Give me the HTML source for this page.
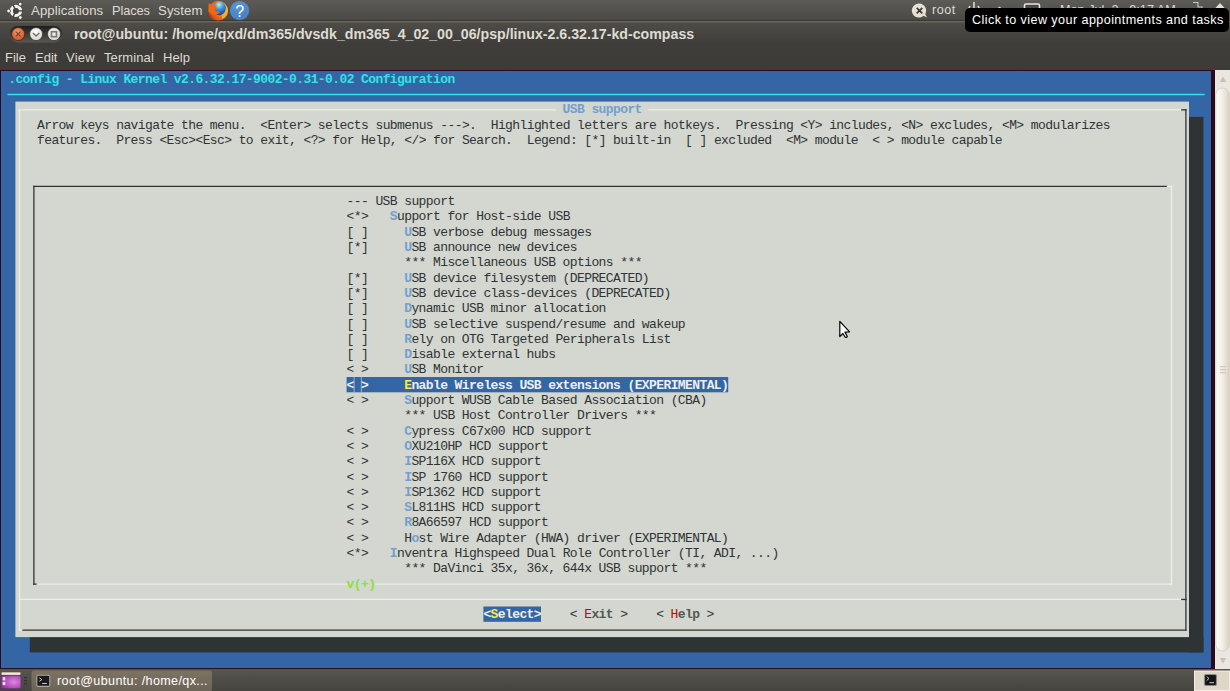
<!DOCTYPE html>
<html><head><meta charset="utf-8"><style>
*{margin:0;padding:0}
html,body{width:1230px;height:691px;overflow:hidden;background:#3c3b37;position:relative}
body{font-family:"Liberation Sans",sans-serif}
#term{position:absolute;left:1.0px;top:71.0px;width:1209.6px;height:596.7px;background:#3465a4;overflow:hidden}
.ui{position:absolute;white-space:pre;color:#dfdbd2;font-family:"Liberation Sans",sans-serif}
.t{position:absolute;white-space:pre;font-family:"Liberation Mono",monospace;font-size:13.0px;line-height:15.3px;letter-spacing:-0.600px}
</style></head>
<body>
<!-- top panel -->
<div style="position:absolute;left:0;top:0;width:1230px;height:20px;background:linear-gradient(#5c5b56,#4b4a46)"></div>
<div style="position:absolute;left:0;top:20px;width:1230px;height:1px;background:#383732"></div>
<div style="position:absolute;left:0;top:21px;width:1230px;height:1px;background:#6e675c"></div>
<div style="position:absolute;left:0;top:22px;width:1230px;height:1px;background:#5a564e"></div>
<!-- window title area + menubar -->
<div style="position:absolute;left:0;top:23px;width:1230px;height:47px;background:linear-gradient(#4e4c47 0,#3e3d39 21px,#3c3b37 100%)"></div>
<!-- panel items -->
<svg style="position:absolute;left:0;top:0" width="260" height="22">
  <circle cx="15.9" cy="10.9" r="4.6" fill="none" stroke="#f4f2ee" stroke-width="3.2"/>
  <g stroke="#45443f" stroke-width="1.4"><line x1="15.9" y1="10.9" x2="22.90" y2="10.90"/><line x1="15.9" y1="10.9" x2="12.94" y2="17.24"/><line x1="15.9" y1="10.9" x2="12.94" y2="4.56"/></g>
  <circle cx="15.9" cy="10.9" r="2.6" fill="#45443f"/>
  <g fill="#f4f2ee" stroke="#3a3935" stroke-width="0.8">
    <circle cx="8.6" cy="11.0" r="1.9"/>
    <circle cx="20.2" cy="4.1" r="1.9"/>
    <circle cx="20.3" cy="17.5" r="1.9"/>
  </g>
  <defs>
    <radialGradient id="ffg" cx="0.45" cy="0.2" r="0.8">
      <stop offset="0" stop-color="#b5f0ff"/><stop offset="0.45" stop-color="#3b93dc"/><stop offset="1" stop-color="#173e8c"/>
    </radialGradient>
    <radialGradient id="ffo" cx="0.8" cy="0.35" r="0.9">
      <stop offset="0" stop-color="#fbd33a"/><stop offset="0.35" stop-color="#f28a1c"/><stop offset="0.75" stop-color="#e45614"/><stop offset="1" stop-color="#b92a0c"/>
    </radialGradient>
    <radialGradient id="hlp" cx="0.45" cy="0.3" r="0.75">
      <stop offset="0" stop-color="#5f97d2"/><stop offset="0.8" stop-color="#4580c2"/><stop offset="1" stop-color="#3a6fb0"/>
    </radialGradient>
  </defs>
  <circle cx="218.1" cy="10.7" r="9.9" fill="url(#ffo)"/>
  <circle cx="219.6" cy="8.6" r="6.6" fill="url(#ffg)"/>
  <path d="M 208.6 3.2 L 211.6 4.6 L 213.6 3.4 L 214.6 5.2 L 216.9 6.6 L 215.6 8.6 L 215.2 10.6 L 217.6 11.6 L 219.8 11.9 L 219.2 13.4 L 216 14.6 L 211.5 14.2 L 208.5 11.5 Z" fill="#ea6a1a"/>
  <path d="M 221.5 14.8 C 224.5 13.5, 226 10.5, 225.8 6.5 L 227.6 8 C 228.6 12, 227 17, 222.5 19 Z" fill="#f7b52a" opacity="0.85"/>
  <circle cx="239.6" cy="10.65" r="9.7" fill="url(#hlp)"/>
  <circle cx="239.6" cy="10.65" r="8.2" fill="none" stroke="#6c9fd6" stroke-width="0.7" opacity="0.5"/>
  <text x="239.6" y="16.8" text-anchor="middle" font-family="Liberation Sans" font-size="16" fill="#ffffff">?</text>
</svg>
<div class="ui" style="left:31px;top:1px;font-size:13.2px;letter-spacing:0.1px;line-height:19px">Applications</div>
<div class="ui" style="left:112px;top:1px;font-size:12.8px;letter-spacing:-0.1px;line-height:19px">Places</div>
<div class="ui" style="left:158px;top:1px;font-size:13.2px;letter-spacing:0.1px;line-height:19px">System</div>
<!-- right side of panel (partially hidden by tooltip) -->
<svg style="position:absolute;left:900px;top:0" width="330" height="22">
  <path d="M 19.5 3.6 A 7 7 0 1 0 23.5 15.8 L 27 17.6 L 25.3 14 A 7 7 0 0 0 19.5 3.6 Z" fill="#e6e1d6"/>
  <path d="M 16.7 7.8 L 22.3 13.4 M 22.3 7.8 L 16.7 13.4" stroke="#3a3935" stroke-width="1.7"/>
  <g stroke="#dfdbd2" stroke-width="1.6" fill="none">
    <path d="M 70 6 A 5 5 0 1 0 78 6"/><path d="M 74 2 L 74 8"/>
  </g>
  <circle cx="99.5" cy="8" r="1.3" fill="#dfdbd2"/>
  <rect x="124.5" y="4" width="15" height="9" rx="1.5" fill="#4a4844" stroke="#ebe6dc" stroke-width="1.6"/>
  <path d="M 293 2.5 L 298 2.5 L 298 7 L 302 7 L 302 10" stroke="#cfcac0" stroke-width="1.1" fill="none"/>
  <path d="M 320 3 L 325.5 9 L 314.5 9 Z" fill="#e4e0d8"/>
</svg>
<div class="ui" style="left:932px;top:1px;font-size:12.6px;letter-spacing:0.5px;line-height:19px">root</div>
<div class="ui" style="left:1060px;top:1px;font-size:12.6px;letter-spacing:0.05px;line-height:19px">Mon Jul  2,  9:17 AM</div>
<!-- window buttons -->
<svg style="position:absolute;left:0;top:22px" width="70" height="24">
  <defs>
    <linearGradient id="pill" x1="0" y1="0" x2="0" y2="1"><stop offset="0" stop-color="#1f1e1c"/><stop offset="1" stop-color="#5a5852"/></linearGradient>
    <radialGradient id="cls" cx="0.45" cy="0.35" r="0.7"><stop offset="0" stop-color="#f79a6a"/><stop offset="1" stop-color="#d8471b"/></radialGradient>
    <radialGradient id="gry" cx="0.45" cy="0.35" r="0.7"><stop offset="0" stop-color="#ffffff"/><stop offset="1" stop-color="#d6d1c8"/></radialGradient>
  </defs>
  <rect x="9.5" y="4" width="53" height="16.5" rx="8.2" fill="url(#pill)"/>
  <circle cx="18.2" cy="12.1" r="6.5" fill="url(#cls)" stroke="#2a2926" stroke-width="0.7"/>
  <path d="M 15.8 9.7 L 20.6 14.5 M 20.6 9.7 L 15.8 14.5" stroke="#6b4436" stroke-width="1.1"/>
  <circle cx="36.1" cy="12.1" r="6.5" fill="url(#gry)" stroke="#2a2926" stroke-width="0.7"/>
  <path d="M 32.9 11 L 36.1 14 L 39.3 11" stroke="#75726c" stroke-width="1.6" fill="none"/>
  <circle cx="54" cy="12.1" r="6.5" fill="url(#gry)" stroke="#2a2926" stroke-width="0.7"/>
  <rect x="51.5" y="9.7" width="5" height="5" stroke="#7a7772" stroke-width="1.7" fill="none"/>
</svg>
<div class="ui" style="left:74px;top:25px;font-size:14.2px;font-weight:bold;letter-spacing:0px;line-height:19px">root@ubuntu: /home/qxd/dm365/dvsdk_dm365_4_02_00_06/psp/linux-2.6.32.17-kd-compass</div>
<!-- menubar -->
<div class="ui" style="left:5px;top:48px;font-size:13px;line-height:19px">File</div>
<div class="ui" style="left:35px;top:48px;font-size:13px;line-height:19px">Edit</div>
<div class="ui" style="left:66px;top:48px;font-size:13px;letter-spacing:0.2px;line-height:19px">View</div>
<div class="ui" style="left:104px;top:48px;font-size:13px;letter-spacing:0.1px;line-height:19px">Terminal</div>
<div class="ui" style="left:163px;top:48px;font-size:13px;letter-spacing:0.1px;line-height:19px">Help</div>
<!-- terminal border -->
<div style="position:absolute;left:0;top:70px;width:1216px;height:599px;background:#2c0a1e"></div>
<!-- scrollbar -->
<div style="position:absolute;left:1215px;top:70px;width:15px;height:599px;background:#ebe7e0"></div>
<svg style="position:absolute;left:1215px;top:70px" width="15" height="599">
  <defs><linearGradient id="thumb" x1="0" y1="0" x2="1" y2="0"><stop offset="0" stop-color="#fdfcfa"/><stop offset="0.45" stop-color="#f3f0ea"/><stop offset="1" stop-color="#dcd2c2"/></linearGradient></defs>
  <path d="M 8 6.5 L 11.3 12 L 4.7 12 Z" fill="#cbc1b0"/>
  <rect x="0.8" y="18" width="13.4" height="563" rx="6.5" fill="url(#thumb)" stroke="#d3cabb" stroke-width="0.8"/>
  <g fill="#d0c7b8"><rect x="5" y="296" width="6" height="1.2"/><rect x="5" y="299" width="6" height="1.2"/><rect x="5" y="302" width="6" height="1.2"/></g>
  <path d="M 8 593.5 L 11.3 588 L 4.7 588 Z" fill="#cbc1b0"/>
</svg>
<!-- taskbar -->
<div style="position:absolute;left:0;top:669px;width:1230px;height:22px;background:linear-gradient(#57554f,#45443f)"></div>
<svg style="position:absolute;left:0;top:669px" width="260" height="22">
  <defs><radialGradient id="desk" cx="0.65" cy="0.5" r="0.7"><stop offset="0" stop-color="#d98ad8"/><stop offset="0.6" stop-color="#b653c0"/><stop offset="1" stop-color="#9a2da6"/></radialGradient>
  <linearGradient id="tbtn" x1="0" y1="0" x2="0" y2="1"><stop offset="0" stop-color="#7c7363"/><stop offset="1" stop-color="#6b6356"/></linearGradient></defs>
  <rect x="1" y="3" width="20" height="17" rx="1.5" fill="#3a3833"/>
  <rect x="1.3" y="6.6" width="19.4" height="12.8" rx="1.2" fill="url(#desk)"/>
  <rect x="1.5" y="3.3" width="19" height="2.6" fill="#efebd2"/>
  <rect x="2.7" y="8.2" width="2.6" height="3.2" fill="#f5e3f5"/><rect x="2.7" y="12.9" width="2.6" height="3.2" fill="#f5e3f5"/>
  <g fill="#34332f"><rect x="24" y="8" width="3" height="1.3"/><rect x="24" y="11" width="3" height="1.3"/><rect x="24" y="14" width="3" height="1.3"/></g>
  <rect x="31.5" y="1.5" width="180.5" height="21" rx="2.5" fill="url(#tbtn)"/>
  <rect x="36.8" y="6.2" width="13" height="11.2" rx="1.5" fill="#1b1b1b" stroke="#a9a9a9" stroke-width="1.1"/>
  <path d="M 39.3 8.8 L 41.8 10.6 L 39.3 12.4" stroke="#c8c8c8" stroke-width="1" fill="none"/>
  <rect x="42.2" y="14" width="4.6" height="1" fill="#d0d0d0"/>
</svg>
<div class="ui" style="left:57px;top:672px;font-size:12.6px;letter-spacing:0.36px;line-height:19px;color:#ffffff">root@ubuntu: /home/qx...</div>
<svg style="position:absolute;left:1190px;top:669px" width="40" height="22">
  <rect x="4.5" y="2" width="35" height="19.5" fill="#dfd6c8" stroke="#f3efe8" stroke-width="1"/>
  <rect x="14.5" y="5.5" width="12" height="11" rx="1.5" fill="#151515" stroke="#8a8a8a" stroke-width="1.2"/>
  <path d="M 16.7 7.5 L 19 9.5 L 16.7 11.5" stroke="#cfcfcf" stroke-width="0.9" fill="none"/>
  <rect x="19.5" y="13.2" width="4.5" height="1" fill="#cfcfcf"/>
</svg>
<!-- tooltip -->
<div style="position:absolute;left:965px;top:8px;width:264px;height:24px;background:#000;border-radius:5px"></div>
<div class="ui" style="left:972px;top:11px;font-size:12.6px;letter-spacing:0.42px;line-height:19px;color:#ffffff">Click to view your appointments and tasks</div>

<div id="term">
<svg width="1209.6" height="596.7" style="position:absolute;left:0;top:0"><rect x="1188.00" y="45.90" width="14.40" height="535.50" fill="#2e3436"/><rect x="28.80" y="566.10" width="1173.60" height="15.30" fill="#2e3436"/><rect x="14.40" y="30.60" width="1173.60" height="535.50" fill="#d3d7cf"/><rect x="345.60" y="306.00" width="381.60" height="15.30" fill="#3465a4"/><rect x="482.40" y="535.50" width="57.60" height="15.30" fill="#3465a4"/><line x1="7.20" y1="23.55" x2="1202.80" y2="23.55" stroke="#34e2e2" stroke-width="1.6" stroke-linecap="square"/><line x1="18.50" y1="38.85" x2="554.40" y2="38.85" stroke="#eeeeec" stroke-width="1.3" stroke-linecap="square"/><line x1="648.00" y1="38.85" x2="1180.80" y2="38.85" stroke="#eeeeec" stroke-width="1.3" stroke-linecap="square"/><line x1="1180.80" y1="38.85" x2="1184.90" y2="38.85" stroke="#2e3436" stroke-width="1.3" stroke-linecap="square"/><line x1="18.50" y1="38.85" x2="18.50" y2="559.05" stroke="#eeeeec" stroke-width="1.3" stroke-linecap="square"/><line x1="21.60" y1="559.05" x2="1184.90" y2="559.05" stroke="#2e3436" stroke-width="1.3" stroke-linecap="square"/><line x1="18.50" y1="559.05" x2="20.90" y2="559.05" stroke="#eeeeec" stroke-width="1.3" stroke-linecap="square"/><line x1="1184.90" y1="38.85" x2="1184.90" y2="559.05" stroke="#2e3436" stroke-width="1.3" stroke-linecap="square"/><line x1="32.90" y1="115.35" x2="1166.40" y2="115.35" stroke="#2e3436" stroke-width="1.3" stroke-linecap="square"/><line x1="1166.40" y1="115.35" x2="1170.50" y2="115.35" stroke="#eeeeec" stroke-width="1.3" stroke-linecap="square"/><line x1="32.90" y1="115.35" x2="32.90" y2="513.15" stroke="#2e3436" stroke-width="1.3" stroke-linecap="square"/><line x1="32.90" y1="513.15" x2="36.00" y2="513.15" stroke="#2e3436" stroke-width="1.3" stroke-linecap="square"/><line x1="36.00" y1="513.15" x2="345.60" y2="513.15" stroke="#eeeeec" stroke-width="1.3" stroke-linecap="square"/><line x1="374.40" y1="513.15" x2="1170.50" y2="513.15" stroke="#eeeeec" stroke-width="1.3" stroke-linecap="square"/><line x1="1170.50" y1="115.35" x2="1170.50" y2="513.15" stroke="#eeeeec" stroke-width="1.3" stroke-linecap="square"/><line x1="18.50" y1="528.45" x2="1180.80" y2="528.45" stroke="#eeeeec" stroke-width="1.3" stroke-linecap="square"/><line x1="1180.80" y1="528.45" x2="1184.90" y2="528.45" stroke="#2e3436" stroke-width="1.3" stroke-linecap="square"/><rect x="352.60" y="306.00" width="1" height="15.30" fill="#b8c2cc" opacity="0.8"/><rect x="359.80" y="306.00" width="1" height="15.30" fill="#b8c2cc" opacity="0.8"/></svg>
<div class="t" style="left:7.20px;top:0.70px;color:#34e2e2;font-weight:bold">.config - Linux Kernel v2.6.32.17-9002-0.31-0.02 Configuration</div><div class="t" style="left:561.60px;top:31.30px;color:#729fcf;font-weight:bold">USB support</div><div class="t" style="left:36.00px;top:46.60px;color:#2e3436">Arrow keys navigate the menu.  &lt;Enter&gt; selects submenus ---&gt;.  Highlighted letters are hotkeys.  Pressing &lt;Y&gt; includes, &lt;N&gt; excludes, &lt;M&gt; modularizes</div><div class="t" style="left:36.00px;top:61.90px;color:#2e3436">features.  Press &lt;Esc&gt;&lt;Esc&gt; to exit, &lt;?&gt; for Help, &lt;/&gt; for Search.  Legend: [*] built-in  [ ] excluded  &lt;M&gt; module  &lt; &gt; module capable</div><div class="t" style="left:345.60px;top:505.60px;color:#8ae234;font-weight:bold">v(+)</div><div class="t" style="left:345.60px;top:123.10px;color:#2e3436">--- </div><div class="t" style="left:374.40px;top:123.10px;color:#2e3436">USB support</div><div class="t" style="left:345.60px;top:138.40px;color:#2e3436">&lt;*&gt;   </div><div class="t" style="left:388.80px;top:138.40px;color:#729fcf;font-weight:bold">S</div><div class="t" style="left:396.00px;top:138.40px;color:#2e3436">upport for Host-side USB</div><div class="t" style="left:345.60px;top:153.70px;color:#2e3436">[ ]     </div><div class="t" style="left:403.20px;top:153.70px;color:#729fcf;font-weight:bold">U</div><div class="t" style="left:410.40px;top:153.70px;color:#2e3436">SB verbose debug messages</div><div class="t" style="left:345.60px;top:169.00px;color:#2e3436">[*]     </div><div class="t" style="left:403.20px;top:169.00px;color:#729fcf;font-weight:bold">U</div><div class="t" style="left:410.40px;top:169.00px;color:#2e3436">SB announce new devices</div><div class="t" style="left:345.60px;top:184.30px;color:#2e3436">        </div><div class="t" style="left:403.20px;top:184.30px;color:#2e3436">*** Miscellaneous USB options ***</div><div class="t" style="left:345.60px;top:199.60px;color:#2e3436">[*]     </div><div class="t" style="left:403.20px;top:199.60px;color:#729fcf;font-weight:bold">U</div><div class="t" style="left:410.40px;top:199.60px;color:#2e3436">SB device filesystem (DEPRECATED)</div><div class="t" style="left:345.60px;top:214.90px;color:#2e3436">[*]     </div><div class="t" style="left:403.20px;top:214.90px;color:#729fcf;font-weight:bold">U</div><div class="t" style="left:410.40px;top:214.90px;color:#2e3436">SB device class-devices (DEPRECATED)</div><div class="t" style="left:345.60px;top:230.20px;color:#2e3436">[ ]     </div><div class="t" style="left:403.20px;top:230.20px;color:#729fcf;font-weight:bold">D</div><div class="t" style="left:410.40px;top:230.20px;color:#2e3436">ynamic USB minor allocation</div><div class="t" style="left:345.60px;top:245.50px;color:#2e3436">[ ]     </div><div class="t" style="left:403.20px;top:245.50px;color:#729fcf;font-weight:bold">U</div><div class="t" style="left:410.40px;top:245.50px;color:#2e3436">SB selective suspend/resume and wakeup</div><div class="t" style="left:345.60px;top:260.80px;color:#2e3436">[ ]     </div><div class="t" style="left:403.20px;top:260.80px;color:#729fcf;font-weight:bold">R</div><div class="t" style="left:410.40px;top:260.80px;color:#2e3436">ely on OTG Targeted Peripherals List</div><div class="t" style="left:345.60px;top:276.10px;color:#2e3436">[ ]     </div><div class="t" style="left:403.20px;top:276.10px;color:#729fcf;font-weight:bold">D</div><div class="t" style="left:410.40px;top:276.10px;color:#2e3436">isable external hubs</div><div class="t" style="left:345.60px;top:291.40px;color:#2e3436">&lt; &gt;     </div><div class="t" style="left:403.20px;top:291.40px;color:#729fcf;font-weight:bold">U</div><div class="t" style="left:410.40px;top:291.40px;color:#2e3436">SB Monitor</div><div class="t" style="left:345.60px;top:306.70px;color:#eeeeec;font-weight:bold">&lt; &gt;     </div><div class="t" style="left:403.20px;top:306.70px;color:#fce94f;font-weight:bold">E</div><div class="t" style="left:410.40px;top:306.70px;color:#eeeeec;font-weight:bold">nable Wireless USB extensions (EXPERIMENTAL)</div><div class="t" style="left:345.60px;top:322.00px;color:#2e3436">&lt; &gt;     </div><div class="t" style="left:403.20px;top:322.00px;color:#729fcf;font-weight:bold">S</div><div class="t" style="left:410.40px;top:322.00px;color:#2e3436">upport WUSB Cable Based Association (CBA)</div><div class="t" style="left:345.60px;top:337.30px;color:#2e3436">        </div><div class="t" style="left:403.20px;top:337.30px;color:#2e3436">*** USB Host Controller Drivers ***</div><div class="t" style="left:345.60px;top:352.60px;color:#2e3436">&lt; &gt;     </div><div class="t" style="left:403.20px;top:352.60px;color:#729fcf;font-weight:bold">C</div><div class="t" style="left:410.40px;top:352.60px;color:#2e3436">ypress C67x00 HCD support</div><div class="t" style="left:345.60px;top:367.90px;color:#2e3436">&lt; &gt;     </div><div class="t" style="left:403.20px;top:367.90px;color:#729fcf;font-weight:bold">O</div><div class="t" style="left:410.40px;top:367.90px;color:#2e3436">XU210HP HCD support</div><div class="t" style="left:345.60px;top:383.20px;color:#2e3436">&lt; &gt;     </div><div class="t" style="left:403.20px;top:383.20px;color:#729fcf;font-weight:bold">I</div><div class="t" style="left:410.40px;top:383.20px;color:#2e3436">SP116X HCD support</div><div class="t" style="left:345.60px;top:398.50px;color:#2e3436">&lt; &gt;     </div><div class="t" style="left:403.20px;top:398.50px;color:#729fcf;font-weight:bold">I</div><div class="t" style="left:410.40px;top:398.50px;color:#2e3436">SP 1760 HCD support</div><div class="t" style="left:345.60px;top:413.80px;color:#2e3436">&lt; &gt;     </div><div class="t" style="left:403.20px;top:413.80px;color:#729fcf;font-weight:bold">I</div><div class="t" style="left:410.40px;top:413.80px;color:#2e3436">SP1362 HCD support</div><div class="t" style="left:345.60px;top:429.10px;color:#2e3436">&lt; &gt;     </div><div class="t" style="left:403.20px;top:429.10px;color:#729fcf;font-weight:bold">S</div><div class="t" style="left:410.40px;top:429.10px;color:#2e3436">L811HS HCD support</div><div class="t" style="left:345.60px;top:444.40px;color:#2e3436">&lt; &gt;     </div><div class="t" style="left:403.20px;top:444.40px;color:#729fcf;font-weight:bold">R</div><div class="t" style="left:410.40px;top:444.40px;color:#2e3436">8A66597 HCD support</div><div class="t" style="left:345.60px;top:459.70px;color:#2e3436">&lt; &gt;     H</div><div class="t" style="left:410.40px;top:459.70px;color:#729fcf;font-weight:bold">o</div><div class="t" style="left:417.60px;top:459.70px;color:#2e3436">st Wire Adapter (HWA) driver (EXPERIMENTAL)</div><div class="t" style="left:345.60px;top:475.00px;color:#2e3436">&lt;*&gt;   </div><div class="t" style="left:388.80px;top:475.00px;color:#729fcf;font-weight:bold">I</div><div class="t" style="left:396.00px;top:475.00px;color:#2e3436">nventra Highspeed Dual Role Controller (TI, ADI, ...)</div><div class="t" style="left:345.60px;top:490.30px;color:#2e3436">        </div><div class="t" style="left:403.20px;top:490.30px;color:#2e3436">*** DaVinci 35x, 36x, 644x USB support ***</div><div class="t" style="left:482.40px;top:536.20px;color:#eeeeec;font-weight:bold">&lt;</div><div class="t" style="left:489.60px;top:536.20px;color:#fce94f;font-weight:bold">S</div><div class="t" style="left:496.80px;top:536.20px;color:#eeeeec;font-weight:bold">elect&gt;</div><div class="t" style="left:568.80px;top:536.20px;color:#2e3436">&lt; </div><div class="t" style="left:583.20px;top:536.20px;color:#cc0000">E</div><div class="t" style="left:590.40px;top:536.20px;color:#555753;font-weight:bold">xit</div><div class="t" style="left:619.20px;top:536.20px;color:#2e3436">&gt;</div><div class="t" style="left:655.20px;top:536.20px;color:#2e3436">&lt; </div><div class="t" style="left:669.60px;top:536.20px;color:#cc0000">H</div><div class="t" style="left:676.80px;top:536.20px;color:#555753;font-weight:bold">elp</div><div class="t" style="left:705.60px;top:536.20px;color:#2e3436">&gt;</div>
</div>
<svg style="position:absolute;left:830px;top:315px" width="30" height="30"><path d="M 9.8 6.4 L 9.8 21.6 L 12.9 18.5 L 15.2 22.2 L 16.7 22.5 L 17.2 21.3 L 15 17.1 L 19.6 16.9 Z" fill="#fff" stroke="#000" stroke-width="1.2" stroke-linejoin="round"/></svg>
</body></html>
